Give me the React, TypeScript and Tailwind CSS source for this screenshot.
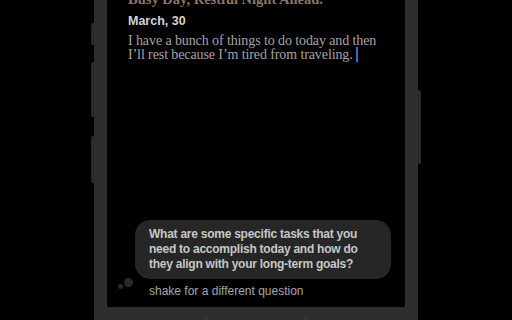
export default function App() {
  const serif = { fontFamily: '"Liberation Serif", "DejaVu Serif", serif' };
  return (
    <div
      className="flex h-[320px] w-[512px] justify-center overflow-hidden bg-black"
      style={{ fontFamily: '"Liberation Sans", Arial, sans-serif' }}
    >
      <div className="relative -mt-[20px] flex h-[340px] w-[324px] shrink-0 flex-col bg-[#2e2e2e] px-[13px]">
        {/* side buttons */}
        <div className="absolute -left-[3px] top-[43px] h-[22px] w-[3px] rounded-l-[2px] bg-[#2a2a2a]" />
        <div className="absolute -left-[3px] top-[82px] h-[55px] w-[3px] rounded-l-[2px] bg-[#2a2a2a]" />
        <div className="absolute -left-[3px] top-[156px] h-[47px] w-[3px] rounded-l-[2px] bg-[#2a2a2a]" />
        <div className="absolute -right-[3px] top-[110px] h-[74px] w-[3px] rounded-r-[2px] bg-[#2a2a2a]" />

        <div className="flex flex-1 flex-col bg-black">
          <div className="pl-[21px] pr-[20px] pt-[9px]">
            <h1
              className="text-[14.5px] font-bold leading-[20px] text-[#8e7560]"
              style={serif}
            >
              Busy Day, Restful Night Ahead.
            </h1>
            <p className="mt-[4px] text-[12.5px] font-bold leading-[16px] text-[#d2d2d2]">
              March, 30
            </p>
            <p
              className="mt-[5px] text-[14px] leading-[14px] tracking-[-0.1px] text-[#a4a4a4]"
              style={serif}
            >
              I have a bunch of things to do today and then I’ll rest because
              I’m tired from traveling.
              <span className="relative ml-[3px] inline-block h-0 w-[2px]">
                <span className="absolute -top-[12px] left-0 h-[15px] w-[2px] bg-[#3f63dd]" />
              </span>
            </p>
          </div>

          <div className="mt-auto pb-[8px]">
            <div className="ml-[28px] mr-[14px] rounded-[15px] bg-[#262626] px-[14px] py-[7px] text-[12px] font-bold leading-[15px] tracking-[-0.25px] text-[#c6c6c6]">
              What are some specific tasks that you need to accomplish today
              and how do they align with your long-term goals?
            </div>
            <div className="-mt-[1px] flex items-start pl-[11px]">
              <div className="mt-[6px] h-[5px] w-[5px] rounded-full bg-[#2a2a2a]" />
              <div className="ml-[1px] h-[9px] w-[9px] rounded-full bg-[#2a2a2a]" />
              <p className="ml-[16px] mt-[5px] text-[12px] leading-[16px] text-[#a6a6a6]">
                shake for a different question
              </p>
            </div>
          </div>
        </div>

        <div className="flex h-[13px] items-end">
          <div className="h-[3px] flex-1" />
          <div className="h-[3px] flex-1 border-l border-[#444]" />
          <div className="h-[3px] flex-1 border-l border-[#444]" />
        </div>
      </div>
    </div>
  );
}
